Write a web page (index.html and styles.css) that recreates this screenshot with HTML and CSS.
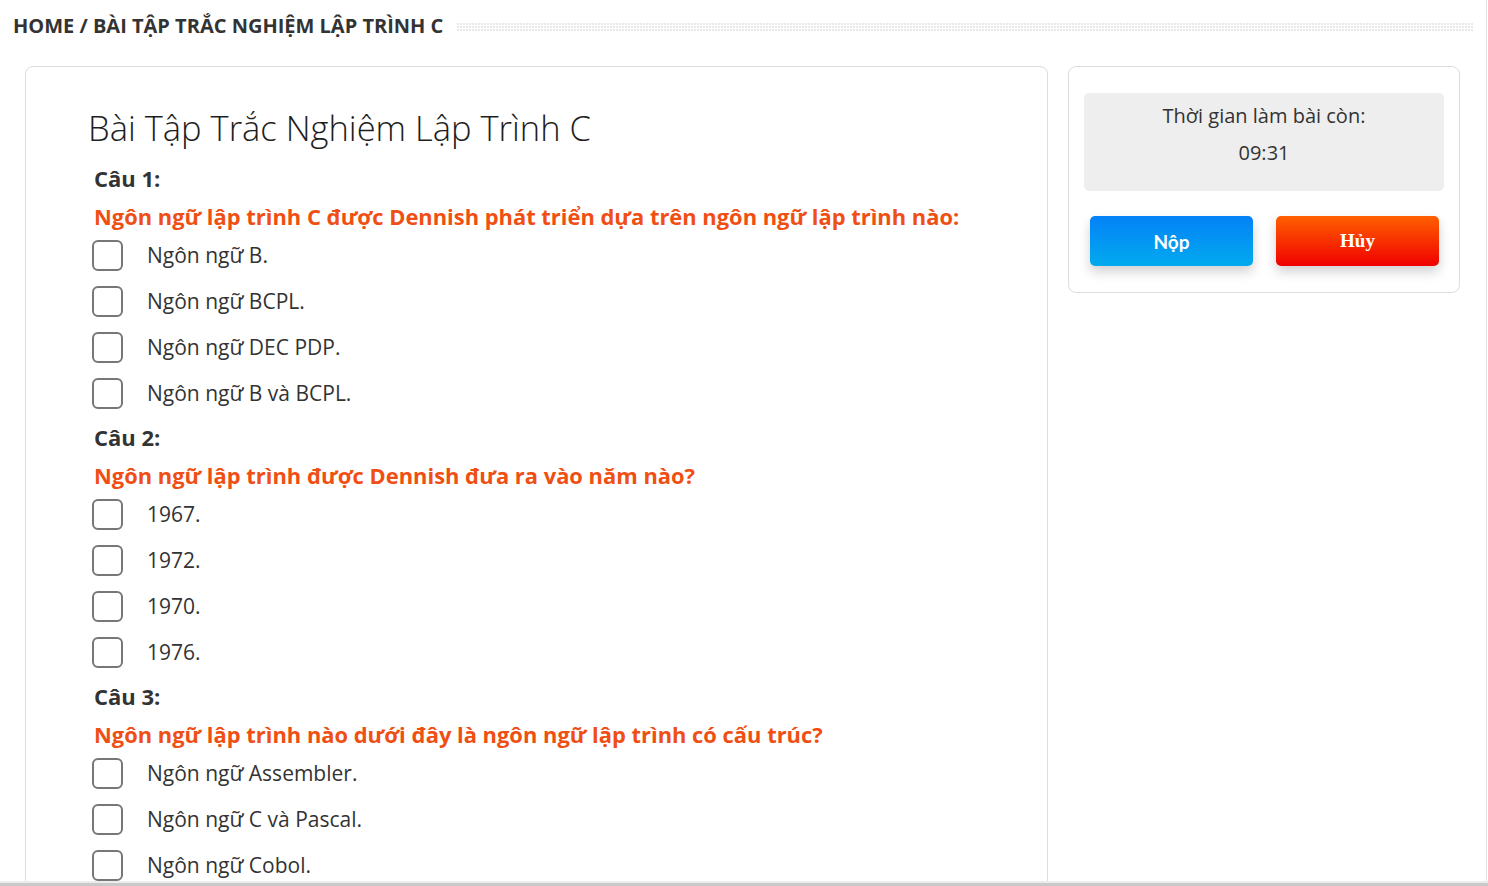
FILE: index.html
```html
<!DOCTYPE html>
<html lang="vi">
<head>
<meta charset="utf-8">
<title>Bài Tập Trắc Nghiệm Lập Trình C</title>
<link rel="stylesheet" href="styles.css">
</head>
<body>
<div class="page">
  <div class="viewport">
    <div class="topbar">
      <div class="crumb">HOME / BÀI TẬP TRẮC NGHIỆM LẬP TRÌNH C</div>
      <div class="crumb-divider"></div>
    </div>
    <div class="content">
      <main class="quiz-card">
        <h1 class="quiz-title">Bài Tập Trắc Nghiệm Lập Trình C</h1>

        <section class="question">
          <div class="q-label">Câu 1:</div>
          <div class="q-text">Ngôn ngữ lập trình C được Dennish phát triển dựa trên ngôn ngữ lập trình nào:</div>
          <label class="option"><span class="box"></span><span class="opt-text">Ngôn ngữ B.</span></label>
          <label class="option"><span class="box"></span><span class="opt-text">Ngôn ngữ BCPL.</span></label>
          <label class="option"><span class="box"></span><span class="opt-text">Ngôn ngữ DEC PDP.</span></label>
          <label class="option"><span class="box"></span><span class="opt-text">Ngôn ngữ B và BCPL.</span></label>
        </section>

        <section class="question">
          <div class="q-label">Câu 2:</div>
          <div class="q-text">Ngôn ngữ lập trình được Dennish đưa ra vào năm nào?</div>
          <label class="option"><span class="box"></span><span class="opt-text">1967.</span></label>
          <label class="option"><span class="box"></span><span class="opt-text">1972.</span></label>
          <label class="option"><span class="box"></span><span class="opt-text">1970.</span></label>
          <label class="option"><span class="box"></span><span class="opt-text">1976.</span></label>
        </section>

        <section class="question">
          <div class="q-label">Câu 3:</div>
          <div class="q-text">Ngôn ngữ lập trình nào dưới đây là ngôn ngữ lập trình có cấu trúc?</div>
          <label class="option"><span class="box"></span><span class="opt-text">Ngôn ngữ Assembler.</span></label>
          <label class="option"><span class="box"></span><span class="opt-text">Ngôn ngữ C và Pascal.</span></label>
          <label class="option"><span class="box"></span><span class="opt-text">Ngôn ngữ Cobol.</span></label>
        </section>
      </main>

      <aside class="side-card">
        <div class="timer">
          <div class="timer-line">Thời gian làm bài còn:</div>
          <div class="timer-line">09:31</div>
        </div>
        <div class="actions">
          <button class="btn btn-submit">Nộp</button>
          <button class="btn btn-cancel">Hủy</button>
        </div>
      </aside>
    </div>
  </div>
  <div class="hscroll"></div>
</div>
</body>
</html>
```
FILE: styles.css
```css
* { box-sizing: border-box; }

html, body {
  margin: 0;
  padding: 0;
  background: #fff;
}

body {
  font-family: "Open Sans", "Noto Sans", sans-serif;
  color: #333;
}

.page {
  height: 886px;
  display: flex;
  flex-direction: column;
  overflow: hidden;
}

.viewport {
  flex: 1;
  overflow: hidden;
  border-right: 1px solid #e3e3e3;
  margin-right: 1px;
}

.hscroll {
  height: 5px;
  background: #c9c9c9;
  border-top: 2px solid #ececec;
}

.topbar {
  height: 51px;
  display: flex;
  align-items: center;
  padding-left: 13px;
  padding-right: 12px;
}

.crumb {
  font-size: 20px;
  font-weight: 700;
  color: #333;
  white-space: nowrap;
}

.crumb-divider {
  flex: 1;
  height: 9px;
  margin-left: 13px;
  background-color: #e9e9e9;
  background-image:
    linear-gradient(to right, #fff 1px, transparent 1px),
    linear-gradient(to bottom, #fff 1px, transparent 1px);
  background-size: 3px 3px;
  margin-top: 2px;
}

.content {
  display: flex;
  align-items: flex-start;
  gap: 20px;
  padding: 15px 0 0 25px;
}

.quiz-card {
  width: 1023px;
  flex: none;
  border: 1px solid #ddd;
  border-radius: 8px;
  padding: 37px 20px 0 67px;
  min-height: 900px;
}

.quiz-title {
  margin: 0 0 8px -5px;
  font-size: 34.5px;
  line-height: 48px;
  font-weight: 300;
  color: #1e1e1e;
}

.question {
  display: flex;
  flex-direction: column;
}

.q-label {
  font-size: 22px;
  line-height: 37px;
  font-weight: 700;
  color: #333;
  padding-left: 1px;
}

.q-text {
  font-size: 21.9px;
  line-height: 39px;
  font-weight: 700;
  color: #f04f14;
  padding-left: 1px;
}

.option {
  display: flex;
  align-items: center;
  height: 38px;
  margin-bottom: 8px;
  cursor: pointer;
}

.option:last-child {
  margin-bottom: 7px;
}

.box {
  width: 31px;
  height: 31px;
  flex: none;
  border: 2px solid #777;
  border-radius: 6px;
  background: #fff;
  margin-left: -1px;
}

.opt-text {
  margin-left: 24px;
  font-size: 21px;
  color: #333;
}

.side-card {
  width: 392px;
  flex: none;
  border: 1px solid #ddd;
  border-radius: 8px;
  padding: 26px 15px 26px 15px;
}

.timer {
  background: #eee;
  border-radius: 5px;
  padding: 4px 0 20px;
  text-align: center;
}

.timer-line {
  font-size: 20px;
  line-height: 37px;
  color: #333;
}

.actions {
  display: flex;
  justify-content: space-between;
  margin: 25px 5px 0 6px;
}

.btn {
  width: 163px;
  height: 50px;
  border: none;
  border-radius: 5px;
  color: #fff;
  font-size: 19px;
  font-weight: 700;
  font-family: Lato, "Open Sans", sans-serif;
  box-shadow: 0 6px 12px rgba(0, 0, 0, 0.18);
  cursor: pointer;
}

.btn-submit {
  background: linear-gradient(to bottom, #0482f7, #02aaee);
}

.btn-cancel {
  background: linear-gradient(to bottom, #ff6000, #f00000);
  font-family: "Liberation Serif", "DejaVu Serif", serif;
  font-size: 19px;
}
```
